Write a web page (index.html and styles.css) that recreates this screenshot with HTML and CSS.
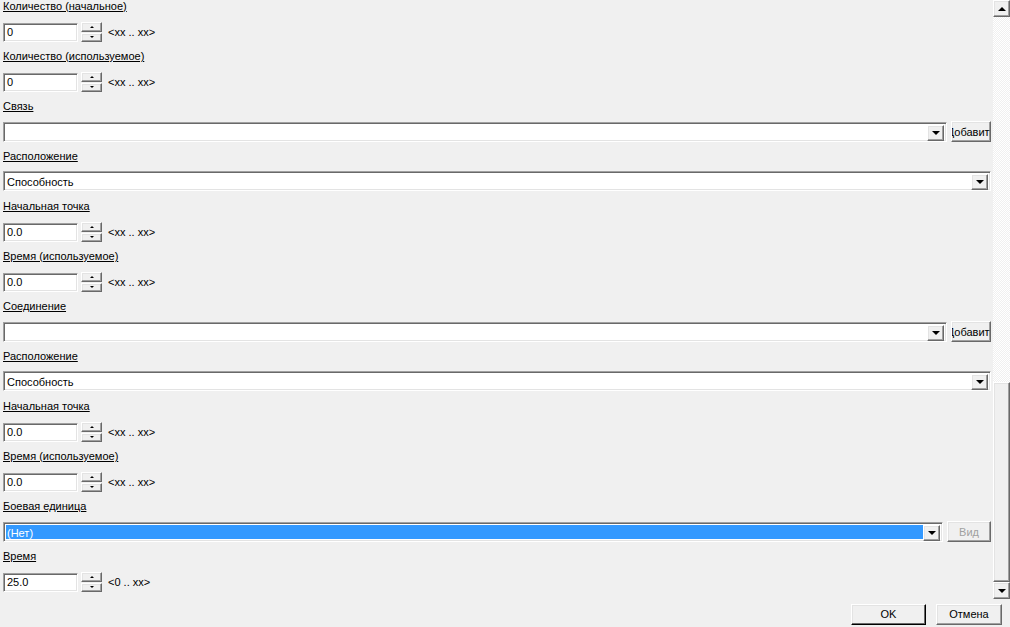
FILE: index.html
```html
<html>
    <head>
        <meta charset="utf-8">
        <link rel="stylesheet" href="styles.css">
    </head>
    <body>
        <div class="window">
            <div class="main">
                <div class="form">
                    <div class="group">
                        <div class="label">Количество (начальное)</div>
                        <div class="spinrow">
                            <div class="field sunken">0</div>
                            <div class="spin"><div class="spinbtn raised"><span class="up"></span></div><div class="spinbtn raised"><span class="down"></span></div></div>
                            <div class="range">&lt;xx .. xx&gt;</div>
                        </div>
                    </div>
                    <div class="group">
                        <div class="label">Количество (используемое)</div>
                        <div class="spinrow">
                            <div class="field sunken">0</div>
                            <div class="spin"><div class="spinbtn raised"><span class="up"></span></div><div class="spinbtn raised"><span class="down"></span></div></div>
                            <div class="range">&lt;xx .. xx&gt;</div>
                        </div>
                    </div>
                    <div class="group">
                        <div class="label">Связь</div>
                        <div class="comborow">
                            <div class="combo sunken"><div class="combotext"></div><div class="dropbtn raised"><span class="down big"></span></div></div>
                            <div class="sidebtn raised"><span>Добавить</span></div>
                        </div>
                    </div>
                    <div class="group">
                        <div class="label">Расположение</div>
                        <div class="comborow">
                            <div class="combo sunken"><div class="combotext">Способность</div><div class="dropbtn raised"><span class="down big"></span></div></div>
                        </div>
                    </div>
                    <div class="group">
                        <div class="label">Начальная точка</div>
                        <div class="spinrow">
                            <div class="field sunken">0.0</div>
                            <div class="spin"><div class="spinbtn raised"><span class="up"></span></div><div class="spinbtn raised"><span class="down"></span></div></div>
                            <div class="range">&lt;xx .. xx&gt;</div>
                        </div>
                    </div>
                    <div class="group">
                        <div class="label">Время (используемое)</div>
                        <div class="spinrow">
                            <div class="field sunken">0.0</div>
                            <div class="spin"><div class="spinbtn raised"><span class="up"></span></div><div class="spinbtn raised"><span class="down"></span></div></div>
                            <div class="range">&lt;xx .. xx&gt;</div>
                        </div>
                    </div>
                    <div class="group">
                        <div class="label">Соединение</div>
                        <div class="comborow">
                            <div class="combo sunken"><div class="combotext"></div><div class="dropbtn raised"><span class="down big"></span></div></div>
                            <div class="sidebtn raised"><span>Добавить</span></div>
                        </div>
                    </div>
                    <div class="group">
                        <div class="label">Расположение</div>
                        <div class="comborow">
                            <div class="combo sunken"><div class="combotext">Способность</div><div class="dropbtn raised"><span class="down big"></span></div></div>
                        </div>
                    </div>
                    <div class="group">
                        <div class="label">Начальная точка</div>
                        <div class="spinrow">
                            <div class="field sunken">0.0</div>
                            <div class="spin"><div class="spinbtn raised"><span class="up"></span></div><div class="spinbtn raised"><span class="down"></span></div></div>
                            <div class="range">&lt;xx .. xx&gt;</div>
                        </div>
                    </div>
                    <div class="group">
                        <div class="label">Время (используемое)</div>
                        <div class="spinrow">
                            <div class="field sunken">0.0</div>
                            <div class="spin"><div class="spinbtn raised"><span class="up"></span></div><div class="spinbtn raised"><span class="down"></span></div></div>
                            <div class="range">&lt;xx .. xx&gt;</div>
                        </div>
                    </div>
                    <div class="group">
                        <div class="label">Боевая единица</div>
                        <div class="comborow">
                            <div class="combo sunken"><div class="combotext selected">(Нет)</div><div class="dropbtn raised"><span class="down big"></span></div></div>
                            <div class="sidebtn raised disabled vid"><span>Вид</span></div>
                        </div>
                    </div>
                    <div class="group">
                        <div class="label">Время</div>
                        <div class="spinrow">
                            <div class="field sunken">25.0</div>
                            <div class="spin"><div class="spinbtn raised"><span class="up"></span></div><div class="spinbtn raised"><span class="down"></span></div></div>
                            <div class="range">&lt;0 .. xx&gt;</div>
                        </div>
                    </div>
                </div>
                <div class="vscroll">
                    <div class="sbbtn raised"><span class="up big"></span></div>
                    <div class="track"></div>
                    <div class="thumb raised"></div>
                    <div class="sbbtn raised"><span class="down big"></span></div>
                </div>
            </div>
            <div class="footer">
                <div class="btn raised default">OK</div>
                <div class="btn raised">Отмена</div>
            </div>
        </div>
    </body>
</html>
```

FILE: styles.css
```css
body {
    margin: 0;
    background-color: #f0f0f0;
    font-family: "Liberation Sans", Arial, sans-serif;
    font-size: 11px;
    color: black;
}
.window {
    width: 1010px;
    height: 627px;
    display: flex;
    flex-direction: column;
    overflow: hidden;
}
.main {
    display: flex;
    height: 599px;
}
.form {
    flex: 1;
    padding: 0 2px 0 3px;
    overflow: hidden;
}
.group {
    height: 50px;
    display: flex;
    flex-direction: column;
}
.label {
    height: 13px;
    line-height: 13px;
    text-decoration: underline;
    margin-top: 0px;
    margin-bottom: 8px;
}

/* 3d borders like old windows */
.sunken {
    box-sizing: border-box;
    border: 1px solid;
    border-color: #a0a0a0 #fff #fff #a0a0a0;
    box-shadow: inset 1px 1px #696969, inset -1px -1px #e3e3e3;
    background-color: white;
}
.raised {
    box-sizing: border-box;
    border: 1px solid;
    border-color: #fff #696969 #696969 #fff;
    box-shadow: inset -1px -1px #a0a0a0, inset 1px 1px #e3e3e3;
    background-color: #f0f0f0;
}

.spinrow {
    display: flex;
    align-items: center;
    margin-top: 1px;
}
.field {
    width: 75px;
    height: 19px;
    line-height: 17px;
    padding-left: 3px;
}
.spin {
    display: flex;
    flex-direction: column;
    gap: 1px;
    margin-left: 3px;
    height: 20px;
}
.spinbtn {
    width: 21px;
    height: 10px;
    display: flex;
    align-items: center;
    justify-content: center;
}
.up {
    width: 0;
    height: 0;
    border-left: 2px solid transparent;
    border-right: 2px solid transparent;
    border-bottom: 2px solid black;
}
.down {
    width: 0;
    height: 0;
    border-left: 2px solid transparent;
    border-right: 2px solid transparent;
    border-top: 2px solid black;
}
.up.big {
    border-left-width: 4px;
    border-right-width: 4px;
    border-bottom-width: 4px;
}
.down.big {
    border-left-width: 4px;
    border-right-width: 4px;
    border-top-width: 4px;
}
.range {
    margin-left: 6px;
}

.comborow {
    display: flex;
    align-items: center;
    gap: 4px;
}
.combo {
    flex: 1;
    height: 20px;
    display: flex;
    padding: 2px;
}
.combotext {
    flex: 1;
    line-height: 16px;
    padding-left: 1px;
    white-space: nowrap;
}
.combotext.selected {
    background-color: #3399ff;
    color: white;
}
.dropbtn {
    width: 17px;
    height: 16px;
    display: flex;
    align-items: center;
    justify-content: center;
}
.sidebtn {
    width: 40px;
    height: 21px;
    overflow: hidden;
    display: flex;
    align-items: center;
    justify-content: center;
}
.sidebtn span {
    white-space: nowrap;
}
.vid {
    width: 44px;
}
.disabled {
    color: #a0a0a0;
}

.vscroll {
    width: 17px;
    display: flex;
    flex-direction: column;
}
.sbbtn {
    width: 17px;
    height: 17px;
    display: flex;
    align-items: center;
    justify-content: center;
}
.track {
    height: 365px;
    background-color: #fff;
    background-image: conic-gradient(#f0f0f0 25%, #fff 0 50%, #f0f0f0 0 75%, #fff 0);
    background-size: 2px 2px;
}
.thumb {
    height: 200px;
}

.footer {
    display: flex;
    justify-content: flex-end;
    gap: 10px;
    padding: 5px 8px 0 0;
}
.btn {
    height: 21px;
    line-height: 19px;
    text-align: center;
    width: 66px;
}
.btn.default {
    width: 75px;
    border-color: #fff #000 #000 #fff;
    box-shadow: inset -1px -1px #696969, inset 1px 1px #e3e3e3;
}
```
